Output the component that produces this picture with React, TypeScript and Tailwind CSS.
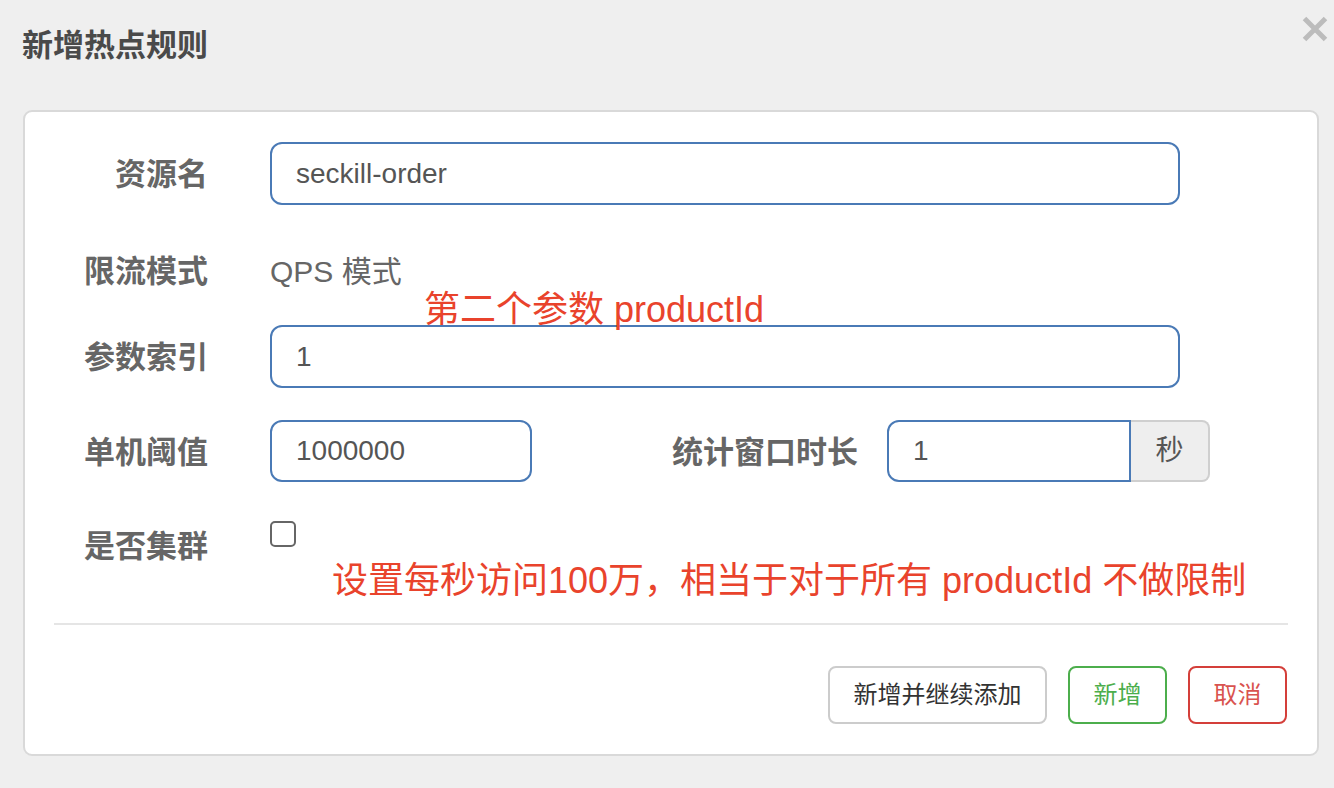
const font = "font-['Liberation_Sans','Noto_Sans_CJK_SC',sans-serif]";

function Label({ children, className = "" }: { children: React.ReactNode; className?: string }) {
  return (
    <div className={`text-right text-[31px] leading-[40px] font-bold text-[#666] pt-[13px] ${className}`}>
      {children}
    </div>
  );
}

export default function App() {
  return (
    <div className={`relative min-h-[788px] w-[1334px] bg-[#efefef] ${font}`}>
      {/* header */}
      <div className="h-[110px] pl-[22px] pt-[26px]">
        <h1 className="text-[31px] leading-[40px] font-bold text-[#4a4a4a]">新增热点规则</h1>
      </div>
      <button className="absolute right-[6px] top-[16px] h-[26px] w-[26px]">
        <svg viewBox="0 0 26 26" className="h-[26px] w-[26px]">
          <path d="M2.5 2.5 L23.5 23.5 M23.5 2.5 L2.5 23.5" stroke="#bcbcbc" strokeWidth="5" />
        </svg>
      </button>

      {/* card */}
      <div className="relative ml-[23px] w-[1296px] rounded-[9px] border-2 border-[#d9d9d9] bg-white">
        <div className="pt-[30px]">
          {/* 资源名 */}
          <div className="flex items-start">
            <Label className="w-[183px]">资源名</Label>
            <input
              readOnly
              value="seckill-order"
              className="ml-[62px] h-[63px] w-[910px] rounded-[12px] border-2 border-[#4a7ab6] pl-[24px] text-[28px] text-[#555] outline-none"
            />
          </div>

          {/* 限流模式 */}
          <div className="mt-[34px] flex items-start">
            <Label className="w-[183px]">限流模式</Label>
            <div className="ml-[62px] pt-[13px] text-[30px] leading-[40px] text-[#666]">QPS 模式</div>
          </div>

          {/* 参数索引 */}
          <div className="mt-[33px] flex items-start">
            <Label className="w-[183px]">参数索引</Label>
            <input
              readOnly
              value="1"
              className="ml-[62px] h-[63px] w-[910px] rounded-[12px] border-2 border-[#4a7ab6] pl-[24px] text-[28px] text-[#555] outline-none"
            />
          </div>

          {/* 单机阈值 / 统计窗口时长 */}
          <div className="mt-[32px] flex items-start">
            <Label className="w-[183px]">单机阈值</Label>
            <input
              readOnly
              value="1000000"
              className="ml-[62px] h-[62px] w-[262px] rounded-[12px] border-2 border-[#4a7ab6] pl-[24px] text-[28px] text-[#555] outline-none"
            />
            <Label className="w-[326px]">统计窗口时长</Label>
            <div className="ml-[29px] flex h-[62px]">
              <input
                readOnly
                value="1"
                className="h-[62px] w-[244px] rounded-l-[12px] border-2 border-[#4a7ab6] pl-[24px] text-[28px] text-[#555] outline-none"
              />
              <div className="flex h-[62px] w-[79px] items-center justify-center rounded-r-[8px] border-2 border-l-0 border-[#cfcfcf] bg-[#eeeeee] text-[28px] text-[#555]">
                秒
              </div>
            </div>
          </div>

          {/* 是否集群 */}
          <div className="mt-[32px] flex items-start">
            <Label className="w-[183px]">是否集群</Label>
            <div className="ml-[62px] mt-[7px] h-[26px] w-[26px] rounded-[5px] border-2 border-[#666]" />
          </div>
        </div>

        <div className="mx-[29px] mt-[56px] h-[2px] bg-[#e5e5e5]" />

        {/* footer buttons */}
        <div className="mt-[41px] flex justify-end gap-[21px] pb-[30px] pr-[30px]">
          <button className="h-[58px] w-[219px] rounded-[8px] border-2 border-[#cccccc] text-[24px] text-[#333]">
            新增并继续添加
          </button>
          <button className="h-[58px] w-[99px] rounded-[8px] border-2 border-[#4cae4c] text-[24px] text-[#4cae4c]">
            新增
          </button>
          <button className="h-[58px] w-[99px] rounded-[8px] border-2 border-[#d43f3a] text-[24px] text-[#d9534f]">
            取消
          </button>
        </div>

        {/* screenshot annotations */}
        <div className="absolute left-[399px] top-[176px] whitespace-nowrap text-[36px] leading-[44px] text-[#e9432c]">
          第二个参数 productId
        </div>
        <div className="absolute left-[307px] top-[447px] whitespace-nowrap text-[36px] leading-[44px] text-[#e9432c]">
          设置每秒访问100万，相当于对于所有 productId 不做限制
        </div>
      </div>
    </div>
  );
}
